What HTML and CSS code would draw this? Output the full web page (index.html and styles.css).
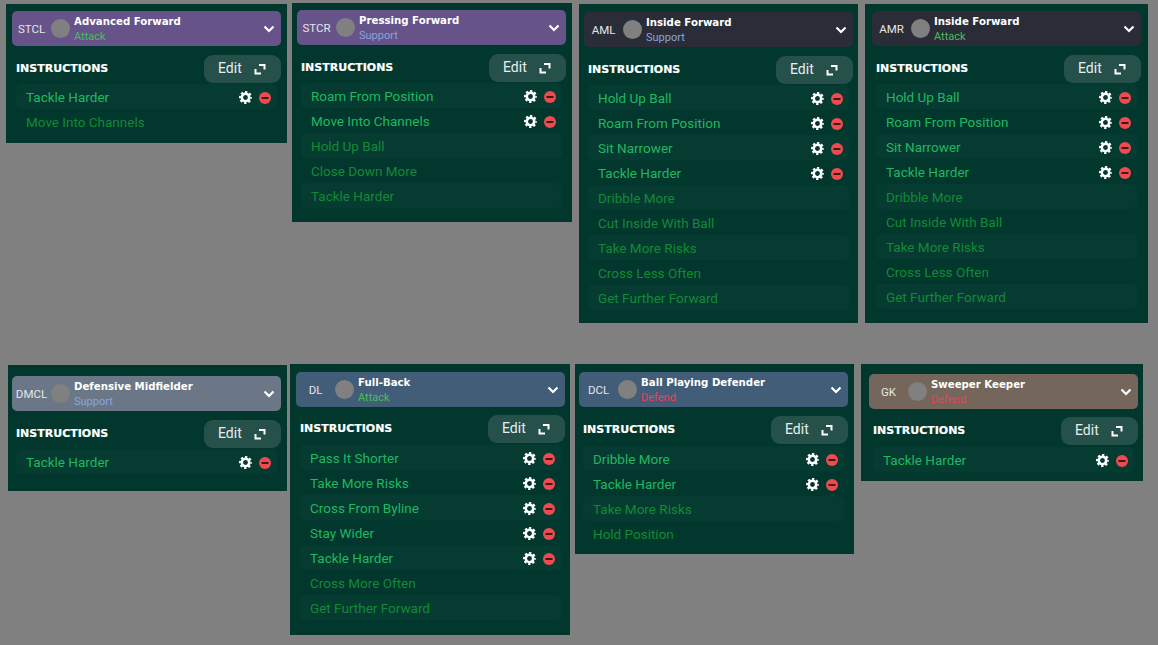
FILE: index.html
```html
<!DOCTYPE html>
<html lang="en">
<head>
<meta charset="utf-8">
<title>Instructions</title>
<link rel="stylesheet" href="styles.css">
</head>
<body>
<svg class="defs" width="0" height="0" aria-hidden="true">
  <symbol id="chev" viewBox="0 0 12 8"><path d="M1.500 1.500 6 6l4.500-4.500" fill="none" stroke="#fff" stroke-width="2.200"/></symbol>
  <symbol id="exp" viewBox="0 0 12 12"><path d="M5 2h5.500v4.500M7 10.500H1.500V6" fill="none" stroke="#fff" stroke-width="2"/></symbol>
  <symbol id="gear" viewBox="0 0 14 14"><circle cx="7" cy="7" r="4" fill="none" stroke="#fff" stroke-width="2.800"/><circle cx="7" cy="7" r="5.900" fill="none" stroke="#fff" stroke-width="2.200" stroke-dasharray="2.500 2.134" stroke-dashoffset="1.250"/></symbol>
  <symbol id="minus" viewBox="0 0 12 12"><circle cx="6" cy="6" r="6" fill="#ee4a50"/><rect x="2.500" y="5" width="7" height="2" fill="#3a1a1a"/></symbol>
</svg>

<main class="canvas">

<section class="panel p1">
  <header class="head purple"><span class="pos">STCL</span><span class="dot"></span><span class="role"><b>Advanced Forward</b><i class="attack">Attack</i></span><svg class="chev"><use href="#chev"/></svg></header>
  <div class="bar"><h2>INSTRUCTIONS</h2><button class="edit">Edit<svg class="exp"><use href="#exp"/></svg></button></div>
  <ul class="rows">
    <li class="on">Tackle Harder<span class="acts"><svg class="gear"><use href="#gear"/></svg><svg class="minus"><use href="#minus"/></svg></span></li>
    <li>Move Into Channels</li>
  </ul>
</section>

<section class="panel p2">
  <header class="head purple"><span class="pos">STCR</span><span class="dot"></span><span class="role"><b>Pressing Forward</b><i class="support">Support</i></span><svg class="chev"><use href="#chev"/></svg></header>
  <div class="bar"><h2>INSTRUCTIONS</h2><button class="edit">Edit<svg class="exp"><use href="#exp"/></svg></button></div>
  <ul class="rows">
    <li class="on">Roam From Position<span class="acts"><svg class="gear"><use href="#gear"/></svg><svg class="minus"><use href="#minus"/></svg></span></li>
    <li class="on">Move Into Channels<span class="acts"><svg class="gear"><use href="#gear"/></svg><svg class="minus"><use href="#minus"/></svg></span></li>
    <li>Hold Up Ball</li>
    <li>Close Down More</li>
    <li>Tackle Harder</li>
  </ul>
</section>

<section class="panel p3">
  <header class="head dark"><span class="pos">AML</span><span class="dot"></span><span class="role"><b>Inside Forward</b><i class="support">Support</i></span><svg class="chev"><use href="#chev"/></svg></header>
  <div class="bar"><h2>INSTRUCTIONS</h2><button class="edit">Edit<svg class="exp"><use href="#exp"/></svg></button></div>
  <ul class="rows">
    <li class="on">Hold Up Ball<span class="acts"><svg class="gear"><use href="#gear"/></svg><svg class="minus"><use href="#minus"/></svg></span></li>
    <li class="on">Roam From Position<span class="acts"><svg class="gear"><use href="#gear"/></svg><svg class="minus"><use href="#minus"/></svg></span></li>
    <li class="on">Sit Narrower<span class="acts"><svg class="gear"><use href="#gear"/></svg><svg class="minus"><use href="#minus"/></svg></span></li>
    <li class="on">Tackle Harder<span class="acts"><svg class="gear"><use href="#gear"/></svg><svg class="minus"><use href="#minus"/></svg></span></li>
    <li>Dribble More</li>
    <li>Cut Inside With Ball</li>
    <li>Take More Risks</li>
    <li>Cross Less Often</li>
    <li>Get Further Forward</li>
  </ul>
</section>

<section class="panel p4">
  <header class="head dark"><span class="pos">AMR</span><span class="dot"></span><span class="role"><b>Inside Forward</b><i class="attack">Attack</i></span><svg class="chev"><use href="#chev"/></svg></header>
  <div class="bar"><h2>INSTRUCTIONS</h2><button class="edit">Edit<svg class="exp"><use href="#exp"/></svg></button></div>
  <ul class="rows">
    <li class="on">Hold Up Ball<span class="acts"><svg class="gear"><use href="#gear"/></svg><svg class="minus"><use href="#minus"/></svg></span></li>
    <li class="on">Roam From Position<span class="acts"><svg class="gear"><use href="#gear"/></svg><svg class="minus"><use href="#minus"/></svg></span></li>
    <li class="on">Sit Narrower<span class="acts"><svg class="gear"><use href="#gear"/></svg><svg class="minus"><use href="#minus"/></svg></span></li>
    <li class="on">Tackle Harder<span class="acts"><svg class="gear"><use href="#gear"/></svg><svg class="minus"><use href="#minus"/></svg></span></li>
    <li>Dribble More</li>
    <li>Cut Inside With Ball</li>
    <li>Take More Risks</li>
    <li>Cross Less Often</li>
    <li>Get Further Forward</li>
  </ul>
</section>

<section class="panel p5">
  <header class="head grey"><span class="pos">DMCL</span><span class="dot"></span><span class="role"><b>Defensive Midfielder</b><i class="support">Support</i></span><svg class="chev"><use href="#chev"/></svg></header>
  <div class="bar"><h2>INSTRUCTIONS</h2><button class="edit">Edit<svg class="exp"><use href="#exp"/></svg></button></div>
  <ul class="rows">
    <li class="on">Tackle Harder<span class="acts"><svg class="gear"><use href="#gear"/></svg><svg class="minus"><use href="#minus"/></svg></span></li>
  </ul>
</section>

<section class="panel p6">
  <header class="head blue"><span class="pos">DL</span><span class="dot"></span><span class="role"><b>Full-Back</b><i class="attack">Attack</i></span><svg class="chev"><use href="#chev"/></svg></header>
  <div class="bar"><h2>INSTRUCTIONS</h2><button class="edit">Edit<svg class="exp"><use href="#exp"/></svg></button></div>
  <ul class="rows">
    <li class="on">Pass It Shorter<span class="acts"><svg class="gear"><use href="#gear"/></svg><svg class="minus"><use href="#minus"/></svg></span></li>
    <li class="on">Take More Risks<span class="acts"><svg class="gear"><use href="#gear"/></svg><svg class="minus"><use href="#minus"/></svg></span></li>
    <li class="on">Cross From Byline<span class="acts"><svg class="gear"><use href="#gear"/></svg><svg class="minus"><use href="#minus"/></svg></span></li>
    <li class="on">Stay Wider<span class="acts"><svg class="gear"><use href="#gear"/></svg><svg class="minus"><use href="#minus"/></svg></span></li>
    <li class="on">Tackle Harder<span class="acts"><svg class="gear"><use href="#gear"/></svg><svg class="minus"><use href="#minus"/></svg></span></li>
    <li>Cross More Often</li>
    <li>Get Further Forward</li>
  </ul>
</section>

<section class="panel p7">
  <header class="head blue"><span class="pos">DCL</span><span class="dot"></span><span class="role"><b>Ball Playing Defender</b><i class="defend">Defend</i></span><svg class="chev"><use href="#chev"/></svg></header>
  <div class="bar"><h2>INSTRUCTIONS</h2><button class="edit">Edit<svg class="exp"><use href="#exp"/></svg></button></div>
  <ul class="rows">
    <li class="on">Dribble More<span class="acts"><svg class="gear"><use href="#gear"/></svg><svg class="minus"><use href="#minus"/></svg></span></li>
    <li class="on">Tackle Harder<span class="acts"><svg class="gear"><use href="#gear"/></svg><svg class="minus"><use href="#minus"/></svg></span></li>
    <li>Take More Risks</li>
    <li>Hold Position</li>
  </ul>
</section>

<section class="panel p8">
  <header class="head brown"><span class="pos">GK</span><span class="dot"></span><span class="role"><b>Sweeper Keeper</b><i class="defend">Defend</i></span><svg class="chev"><use href="#chev"/></svg></header>
  <div class="bar"><h2>INSTRUCTIONS</h2><button class="edit">Edit<svg class="exp"><use href="#exp"/></svg></button></div>
  <ul class="rows">
    <li class="on">Tackle Harder<span class="acts"><svg class="gear"><use href="#gear"/></svg><svg class="minus"><use href="#minus"/></svg></span></li>
  </ul>
</section>

</main>
</body>
</html>
```

FILE: styles.css
```css
html, body {
  margin: 0;
  padding: 0;
  background: #808080;
}
.defs { position: absolute; }
.canvas {
  position: relative;
  width: 1158px;
  height: 645px;
  overflow: hidden;
  font-family: Roboto, "Liberation Sans", sans-serif;
}
.panel {
  position: absolute;
  box-sizing: border-box;
  background: #02372e;
  padding: 7px 6px 0;
}
.p1 { left: 6px; top: 4px; width: 281px; height: 139px; }
.p2 { left: 292px; top: 3px; width: 280px; height: 219px; padding-left: 5px; }
.p3 { left: 579px; top: 4px; width: 279px; height: 319px; padding: 8px 5px 0; }
.p4 { left: 865px; top: 4px; width: 283px; height: 319px; padding-left: 7px; padding-right: 7px; }
.p5 { left: 8px; top: 365px; width: 279px; height: 126px; padding-top: 11px; padding-left: 4px; }
.p6 { left: 290px; top: 364px; width: 280px; height: 271px; padding-top: 8px; padding-right: 5px; }
.p7 { left: 575px; top: 364px; width: 279px; height: 190px; padding: 8px 6px 0 4px; }
.p8 { left: 861px; top: 364px; width: 282px; height: 117px; padding: 10px 5px 0 8px; }

.head {
  display: flex;
  align-items: center;
  height: 35px;
  border-radius: 5px;
  color: #fff;
}
.purple { background: #65538a; }
.dark { background: #2a2d38; }
.grey { background: #6b7787; }
.blue { background: #425d78; }
.brown { background: #75665b; }
.pos {
  width: 39px;
  box-sizing: border-box;
  text-align: center;
  font-size: 11.500px;
  color: #e6e6e6;
}
.dot {
  flex: none;
  width: 19px;
  height: 19px;
  border-radius: 50%;
  background: #808080;
}
.role {
  flex: 1;
  display: flex;
  flex-direction: column;
  margin-left: 4px;
  line-height: 15px;
}
.role b {
  font: bold 10.200px "DejaVu Sans", sans-serif;
  line-height: 15px;
}
.role i {
  font-style: normal;
  font-size: 11px;
}
.attack { color: #48bd5e; }
.support { color: #88a6de; }
.defend { color: #e2445a; }
.chev { width: 12px; height: 8px; margin-right: 6px; }

.bar {
  display: flex;
  align-items: center;
  justify-content: space-between;
  margin-top: 9px;
  height: 28px;
  padding-left: 4px;
}
.p6 .bar, .p8 .bar { margin-top: 8px; }
.bar h2 {
  margin: 0 0 2px;
  color: #fff;
  font: bold 11px "DejaVu Sans", sans-serif;
  -webkit-text-stroke: 0.2px #fff;
}
.edit {
  display: flex;
  align-items: center;
  box-sizing: border-box;
  width: 77px;
  height: 28px;
  padding: 0 0 2px 14px;
  border: 0;
  border-radius: 9px;
  background: #26504a;
  color: #e6eeee;
  font: 14px Roboto, sans-serif;
}
.exp { width: 12px; height: 12px; margin-left: 12px; margin-top: 2px; }

.rows {
  list-style: none;
  margin: 1px 4px 0;
  padding: 0;
}
.p6 .rows, .p7 .rows, .p8 .rows { margin-top: 2px; }
.rows li {
  display: flex;
  align-items: center;
  justify-content: space-between;
  height: 25px;
  padding: 0 6px 0 10px;
  border-radius: 5px;
  color: #128a35;
  font-size: 13.500px;
}
.rows li:nth-child(odd) { background: #063b32; }
.rows li.on { color: #20b860; }
.acts { display: flex; align-items: center; gap: 7px; margin-top: 2px; }
.gear { width: 13px; height: 13px; }
.minus { width: 12px; height: 12px; }
```
